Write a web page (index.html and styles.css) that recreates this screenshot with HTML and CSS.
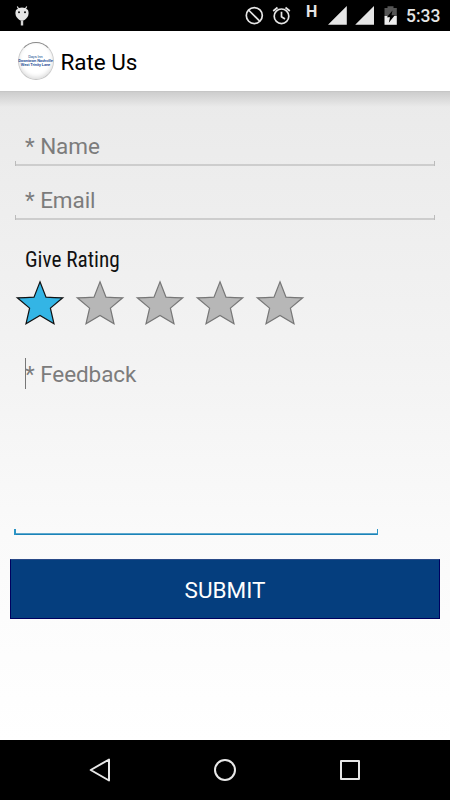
FILE: index.html
```html
<!DOCTYPE html>
<html lang="en">
<head>
<meta charset="utf-8">
<title>Rate Us</title>
<link rel="stylesheet" href="styles.css">
</head>
<body>
<svg class="defs" width="0" height="0" aria-hidden="true">
  <symbol id="star" viewBox="0 0 60 60"><path d="M30 11.800 36 27.100Q44.500 27.800 52.700 27.800L40.400 38.100 44 53.800 30 45.500 16 53.800 19.600 38.100 7.300 27.800Q15.500 27.800 24 27.100Z"/></symbol>
</svg>
<div class="screen">
  <header class="status">
    <svg class="droid" width="16" height="22" viewBox="0 0 16 22"><path d="M3.300 1.500 4.700 4M12.700 1.500 11.300 4" stroke="#e5e5e5" stroke-width="1.200"/><path d="M2 5Q8 .2 14 5Q15.400 9 13.500 12Q11 15.700 8 15.700Q5 15.700 2.500 12Q.6 9 2 5Z" fill="#e5e5e5"/><circle cx="5" cy="7.300" r="1" fill="#111"/><circle cx="11" cy="7.300" r="1" fill="#111"/><path d="M8 15.500V20.500" stroke="#d5d5d5" stroke-width="2.400"/></svg>
    <svg class="icons" width="160" height="31" viewBox="240 0 160 31">
      <g fill="none" stroke="#e5e5e5" stroke-width="1.700">
        <circle cx="254.300" cy="15.600" r="8"/><path d="M248.500 10 260 21.400"/>
        <circle cx="281.500" cy="16.300" r="7.300"/><path d="M281.500 11.800V16.800L285 19M273.200 11 277.500 7.500M285.500 7.500 289.800 11"/>
      </g>
      <path d="M346.800 6V24.800H328ZM374 6V24.800H355.200Z" fill="#e5e5e5"/>
      <path d="M384.500 8H387.500V6.200H393.500V8H396.800V16H384.500Z" fill="#555"/>
      <path d="M384.500 16H396.800V24.800H384.500Z" fill="#eee"/>
      <path d="M392.500 10.500 386.800 17.200H390L388.800 22.800 394.800 15.300H391.500Z" fill="#000"/>
    </svg>
    <span class="net">H</span>
    <time class="clock">5:33</time>
  </header>
  <div class="appbar">
    <div class="logo"><span>Days Inn</span><b>Downtown Nashville</b><b>West Trinity Lane</b></div>
    <h1>Rate Us</h1>
  </div>
  <main class="content">
    <div class="field">* Name</div>
    <div class="field">* Email</div>
    <p class="label">Give Rating</p>
    <div class="stars">
      <svg class="on"><use href="#star"/></svg>
      <svg><use href="#star"/></svg>
      <svg><use href="#star"/></svg>
      <svg><use href="#star"/></svg>
      <svg><use href="#star"/></svg>
    </div>
    <div class="feedback"><span>* Feedback</span></div>
    <button class="submit">SUBMIT</button>
  </main>
  <nav class="nav">
    <svg viewBox="0 0 30 30"><path d="M5.700 15 24 4.500V25.500Z"/></svg>
    <svg viewBox="0 0 30 30"><circle cx="15" cy="15" r="10"/></svg>
    <svg viewBox="0 0 30 30"><rect x="6" y="6" width="18" height="18"/></svg>
  </nav>
</div>
</body>
</html>
```
FILE: styles.css
```css
* { box-sizing: border-box; }
body { margin: 0; font-family: Roboto, sans-serif; }
.defs { position: absolute; }
.screen { width: 450px; height: 800px; display: flex; flex-direction: column; overflow: hidden; background: #fff; }

.status { height: 31px; flex: none; display: flex; background: #000; color: #e5e5e5; position: relative; }
.droid { margin: 5px 0 0 14px; }
.icons { margin-left: 210px; }
.net { position: absolute; left: 306px; top: 2px; font-size: 16px; line-height: 19px; font-weight: 700; }
.clock { margin-left: 6px; font-size: 17.5px; line-height: 33px; font-weight: 500; }

.appbar { height: 60px; flex: none; display: flex; align-items: center; background: #fff; }
.logo {
  width: 36px; height: 38px; margin-left: 17.500px; border-radius: 50%;
  display: flex; flex-direction: column; align-items: center; justify-content: center;
  border: 1px solid #ccc; border-top-color: #888; border-bottom-color: #c4c4c4;
  box-shadow: inset 0 -2px 4px #ddd;
  color: #1c4f94; font-size: 4px; line-height: 4.300px; letter-spacing: -.1px; white-space: nowrap;
}
.logo b { font-weight: 600; }
h1 { margin: 2px 0 0 7px; font-size: 22.5px; line-height: 30px; font-weight: 400; letter-spacing: -.05px; color: #000; }

.content {
  flex: 1; display: flex; flex-direction: column;
  background:
    linear-gradient(#cdcdcd, #cdcdcd00) 0 0 / 100% 15px no-repeat,
    linear-gradient(#eaeaea, #f3f3f3 42%, #fafafa 68%, #fff);
  border-top: 1px solid #c6c6c6;
  padding-top: 27px;
}
.field, .feedback { font-size: 22.5px; letter-spacing: -.07px; color: #7c7c7c; }
.field {
  height: 47px; margin: 0 15px 7px; padding: 12px 10px 0; line-height: 30px;
  background:
    linear-gradient(#bbb, #bbb) 0 100% / 1px 5px no-repeat,
    linear-gradient(#bbb, #bbb) 100% 100% / 1px 5px no-repeat,
    linear-gradient(#cdcdcd, #cdcdcd) 0 100% / 100% 2px no-repeat;
}
.label { margin: 18px 0 0 25px; font-size: 21.3px; line-height: 30px; color: #111; font-family: "Roboto Condensed", Roboto, sans-serif; }
.stars { display: flex; margin: -5px 0 0 10px; height: 60px; }
.stars svg { width: 60px; height: 60px; fill: #b7b7b7; stroke: #777; stroke-width: 1.200; }
.stars .on { fill: #33b5e5; stroke: #111; }
.feedback {
  width: 364px; height: 201px; margin: 4px 0 0 14px; padding: 24px 11px 0; line-height: 33px;
  background:
    linear-gradient(#2b95c6, #2b95c6) 0 100% / 2px 6px no-repeat,
    linear-gradient(#2b95c6, #2b95c6) 100% 100% / 1px 6px no-repeat,
    linear-gradient(#5fa9ce 50%, #1b83b8 50%) 0 100% / 100% 2px no-repeat;
}
.feedback span { display: inline-block; background: linear-gradient(#777, #777) 0 0 / 1px 31px no-repeat; }
.submit {
  height: 60px; margin: 24px 10px 0; padding: 2px 0 0; border: 1px solid #00005f; border-top-color: #294a88;
  background: #053e7e; color: #fff; font: 400 22.5px/30px Roboto, sans-serif;
}

.nav { height: 60px; flex: none; background: #000; display: flex; align-items: center; justify-content: center; gap: 95px; }
.nav svg { width: 30px; height: 30px; fill: none; stroke: #e8e8e8; stroke-width: 2; stroke-linejoin: round; }
```
